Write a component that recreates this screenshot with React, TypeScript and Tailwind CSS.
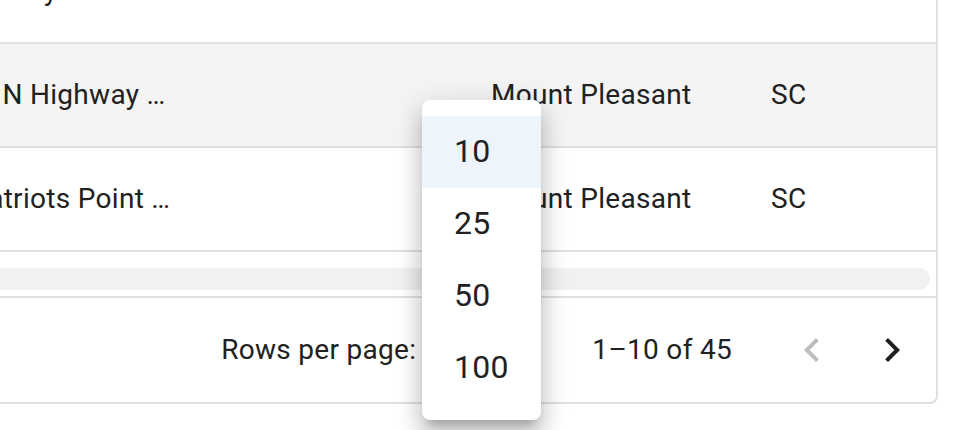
import { useState } from "react";

type Place = {
  id: number;
  address: string;
  address2: string;
  city: string;
  state: string;
};

const places: Place[] = [
  { id: 1, address: "3420 Hwy 17", address2: "", city: "Mount Pleasant", state: "SC" },
  { id: 2, address: "1039 N Highway …", address2: "", city: "Mount Pleasant", state: "SC" },
  { id: 3, address: "10 Patriots Point …", address2: "", city: "Mount Pleasant", state: "SC" },
];

const pageSizes = [10, 25, 50, 100];

function ChevronLeft({ className }: { className?: string }) {
  return (
    <svg viewBox="0 0 24 24" className={className} fill="currentColor">
      <path d="M15.41 16.59 10.83 12l4.58-4.59L14 6l-6 6 6 6z" />
    </svg>
  );
}

function ChevronRight({ className }: { className?: string }) {
  return (
    <svg viewBox="0 0 24 24" className={className} fill="currentColor">
      <path d="M8.59 16.59 13.17 12 8.59 7.41 10 6l6 6-6 6z" />
    </svg>
  );
}

export default function App() {
  const [pageSize, setPageSize] = useState(10);
  const [hovered] = useState(2);

  return (
    <div className="relative h-[430px] w-[958px] overflow-hidden bg-white font-['Roboto','Liberation_Sans',sans-serif] text-[#212121]">
      {/* grid, scrolled down and to the right */}
      <div className="-mt-[60px] w-[938px] overflow-hidden rounded-br-[8px] border-r-2 border-b-2 border-[#e0e0e0]">
        <div className="-ml-[89px] w-[1025px]">
          {places.map((p) => (
            <div
              key={p.id}
              className={`flex h-[104px] items-center border-b-2 border-[#e0e0e0] text-[28px] tracking-[0.01071em] ${
                hovered === p.id ? "bg-[#f4f4f4]" : "bg-white"
              }`}
            >
              <div className="w-[280px] shrink-0 whitespace-nowrap px-[20px]">{p.address}</div>
              <div className="w-[280px] shrink-0 overflow-hidden whitespace-nowrap px-[20px]">{p.address2}</div>
              <div className="w-[280px] shrink-0 overflow-hidden whitespace-nowrap px-[20px]">{p.city}</div>
              <div className="w-[280px] shrink-0 overflow-hidden whitespace-nowrap px-[20px]">{p.state}</div>
            </div>
          ))}
        </div>

        {/* horizontal scrollbar */}
        <div className="-ml-[40px] h-[44px] pt-[16px] pr-[6px]">
          <div className="h-[22px] rounded-full bg-[#f1f1f1]" />
        </div>

        {/* pagination footer */}
        <div className="flex h-[106px] items-center justify-end border-t-2 border-[#e0e0e0] pr-[4px] text-[28px] tracking-[0.01071em]">
          <span>Rows per page:</span>
          <div className="ml-[16px] mr-[64px] flex w-[96px] items-center justify-between pl-[16px]">
            <span>{pageSize}</span>
            <svg viewBox="0 0 24 24" className="h-[48px] w-[48px]" fill="currentColor">
              <path d="M7 10l5 5 5-5z" />
            </svg>
          </div>
          <span>1–10 of 45</span>
          <div className="ml-[40px] flex">
            <button className="flex h-[80px] w-[80px] items-center justify-center text-[#bdbdbd]">
              <ChevronLeft className="h-[48px] w-[48px]" />
            </button>
            <button className="flex h-[80px] w-[80px] items-center justify-center text-[#1f1f1f]">
              <ChevronRight className="h-[48px] w-[48px]" />
            </button>
          </div>
        </div>
      </div>

      {/* open rows-per-page menu */}
      <ul className="absolute left-[422px] top-[100px] w-[119px] rounded-[8px] bg-white py-[16px] shadow-[0px_10px_10px_-6px_rgba(0,0,0,0.2),0px_16px_20px_2px_rgba(0,0,0,0.14),0px_6px_28px_4px_rgba(0,0,0,0.12)]">
        {pageSizes.map((size) => (
          <li
            key={size}
            onClick={() => setPageSize(size)}
            className={`flex h-[72px] cursor-pointer items-center px-[32px] pb-[3px] text-[32px] leading-[48px] tracking-[0.00938em] ${
              size === pageSize ? "bg-[#edf4fb]" : ""
            }`}
          >
            {size}
          </li>
        ))}
      </ul>
    </div>
  );
}
